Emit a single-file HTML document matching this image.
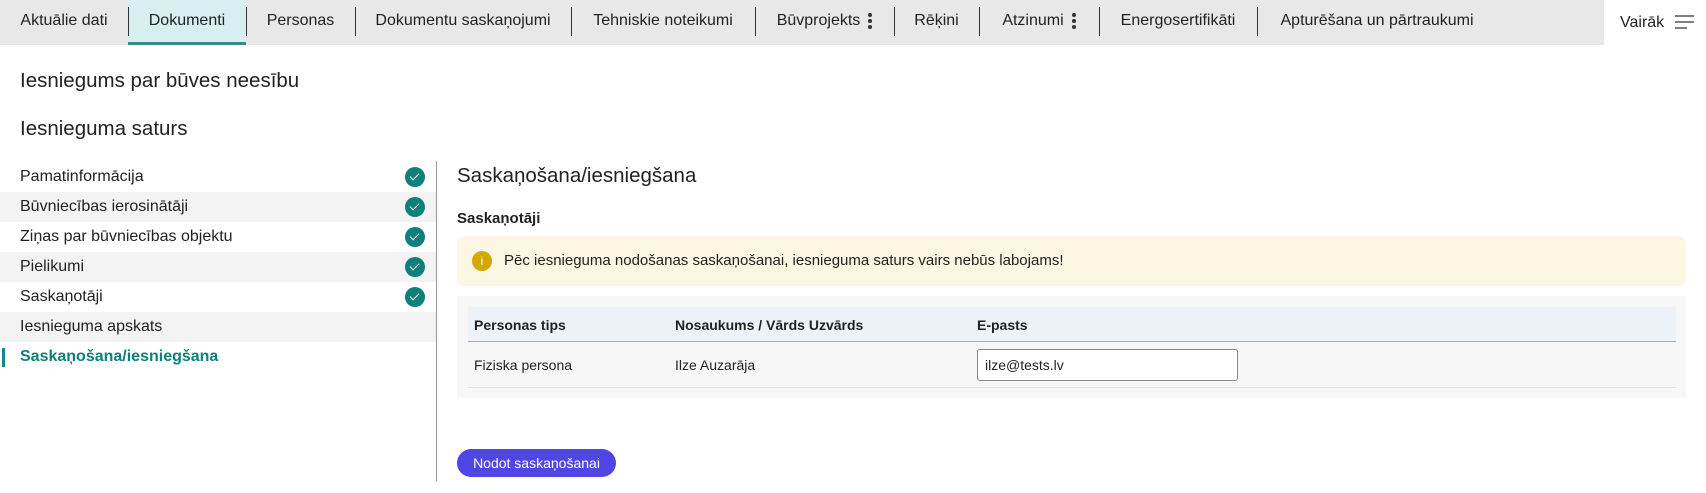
<!DOCTYPE html>
<html><head><meta charset="utf-8"><style>
*{box-sizing:border-box;margin:0;padding:0}
body{width:1706px;height:493px;overflow:hidden;background:#fff;font-family:"Liberation Sans",sans-serif;color:#222;position:relative}
.bar{position:absolute;left:0;top:0;width:1706px;height:45px;background:#e8e8e8}
.tab{position:absolute;top:0;height:45px;line-height:42px;font-size:16px;color:#222;text-align:center}
.sep{position:absolute;top:7px;width:1px;height:29px;background:#333}
.active{background:#d7eff0;border-bottom:3px solid #3a8a87}
.dots{display:inline-block;width:4px;vertical-align:middle;margin-left:8px}
.dots i{display:block;width:4px;height:4px;border-radius:2px;background:#333;margin:2px 0}
.more{position:absolute;left:1604px;top:0;width:102px;height:45px;background:#fff;font-size:16px;line-height:45px;padding-left:16px}
.abs{position:absolute}
.row{position:absolute;left:0;width:436px;height:30px;line-height:30px;font-size:16px;padding-left:20px}
.g{background:#f3f3f3}
.ck{position:absolute;left:405px;top:5px;width:20px;height:20px;border-radius:50%;background:#0f7f7b}
.ck:after{content:"";position:absolute;left:7px;top:4px;width:4px;height:8px;border:solid #fff;border-width:0 1.5px 1.5px 0;transform:rotate(45deg)}
</style></head><body>
<div class="bar"></div>
<div class="tab" style="left:0;width:128px">Aktuālie dati</div>
<div class="tab active" style="left:128px;width:118px">Dokumenti</div>
<div class="tab" style="left:246px;width:109px">Personas</div>
<div class="tab" style="left:355px;width:216px">Dokumentu saskaņojumi</div>
<div class="tab" style="left:571px;width:184px">Tehniskie noteikumi</div>
<div class="tab" style="left:755px;width:139px">Būvprojekts<span class="dots"><i></i><i></i><i></i></span></div>
<div class="tab" style="left:894px;width:85px">Rēķini</div>
<div class="tab" style="left:979px;width:120px">Atzinumi<span class="dots"><i></i><i></i><i></i></span></div>
<div class="tab" style="left:1099px;width:158px">Energosertifikāti</div>
<div class="tab" style="left:1257px;width:240px">Apturēšana un pārtraukumi</div>
<div class="sep" style="left:128px"></div><div class="sep" style="left:246px"></div><div class="sep" style="left:355px"></div><div class="sep" style="left:571px"></div><div class="sep" style="left:755px"></div><div class="sep" style="left:894px"></div><div class="sep" style="left:979px"></div><div class="sep" style="left:1099px"></div><div class="sep" style="left:1257px"></div>
<div class="more">Vairāk <svg width="20" height="14" style="vertical-align:-2px;margin-left:6px"><path d="M0 1h19M0 7h19M0 13h12" stroke="#555" stroke-width="1.5"/></svg></div>

<div class="abs" style="left:20px;top:69px;font-size:20.5px">Iesniegums par būves neesību</div>
<div class="abs" style="left:20px;top:117px;font-size:20.5px">Iesnieguma saturs</div>

<div class="row" style="top:162px">Pamatinformācija<span class="ck"></span></div>
<div class="row g" style="top:192px">Būvniecības ierosinātāji<span class="ck"></span></div>
<div class="row" style="top:222px">Ziņas par būvniecības objektu<span class="ck"></span></div>
<div class="row g" style="top:252px">Pielikumi<span class="ck"></span></div>
<div class="row" style="top:282px">Saskaņotāji<span class="ck"></span></div>
<div class="row g" style="top:312px">Iesnieguma apskats</div>
<div class="row" style="top:342px;color:#0f7f7b;font-weight:bold">Saskaņošana/iesniegšana</div>
<div class="abs" style="left:2px;top:348px;width:3px;height:19px;background:#0f8a86"></div>
<div class="abs" style="left:436px;top:161px;width:1px;height:320px;background:#999"></div>

<div class="abs" style="left:457px;top:164px;font-size:20.5px">Saskaņošana/iesniegšana</div>
<div class="abs" style="left:457px;top:210px;font-size:15px;font-weight:bold">Saskaņotāji</div>
<div class="abs" style="left:457px;top:236px;width:1229px;height:50px;background:#fdf6e3;border-radius:8px"></div>
<div class="abs" style="left:472px;top:251px;width:20px;height:20px;border-radius:50%;background:#d4a800;color:#fff;font-size:12px;text-align:center;line-height:20px">i</div>
<div class="abs" style="left:504px;top:252px;font-size:15px">Pēc iesnieguma nodošanas saskaņošanai, iesnieguma saturs vairs nebūs labojams!</div>

<div class="abs" style="left:457px;top:296px;width:1229px;height:102px;background:#f7f7f7"></div>
<div class="abs" style="left:468px;top:307px;width:1208px;height:35px;background:#edf2f9;border-bottom:1px solid #aaa"></div>
<div class="abs" style="left:474px;top:317px;font-size:14px;font-weight:bold">Personas tips</div>
<div class="abs" style="left:675px;top:317px;font-size:14px;font-weight:bold">Nosaukums / Vārds Uzvārds</div>
<div class="abs" style="left:977px;top:317px;font-size:14px;font-weight:bold">E-pasts</div>
<div class="abs" style="left:468px;top:387px;width:1208px;height:1px;background:#e2e2e2"></div>
<div class="abs" style="left:474px;top:357px;font-size:14px">Fiziska persona</div>
<div class="abs" style="left:675px;top:357px;font-size:14px">Ilze Auzarāja</div>
<div class="abs" style="left:977px;top:349px;width:261px;height:32px;background:#fff;border:1px solid #888;border-radius:3px;font-size:14px;line-height:30px;padding-left:7px">ilze@tests.lv</div>

<div class="abs" style="left:457px;top:449px;width:159px;height:28px;background:#5046e5;border-radius:14px;color:#fff;font-size:14px;line-height:28px;text-align:center">Nodot saskaņošanai</div>
</body></html>
